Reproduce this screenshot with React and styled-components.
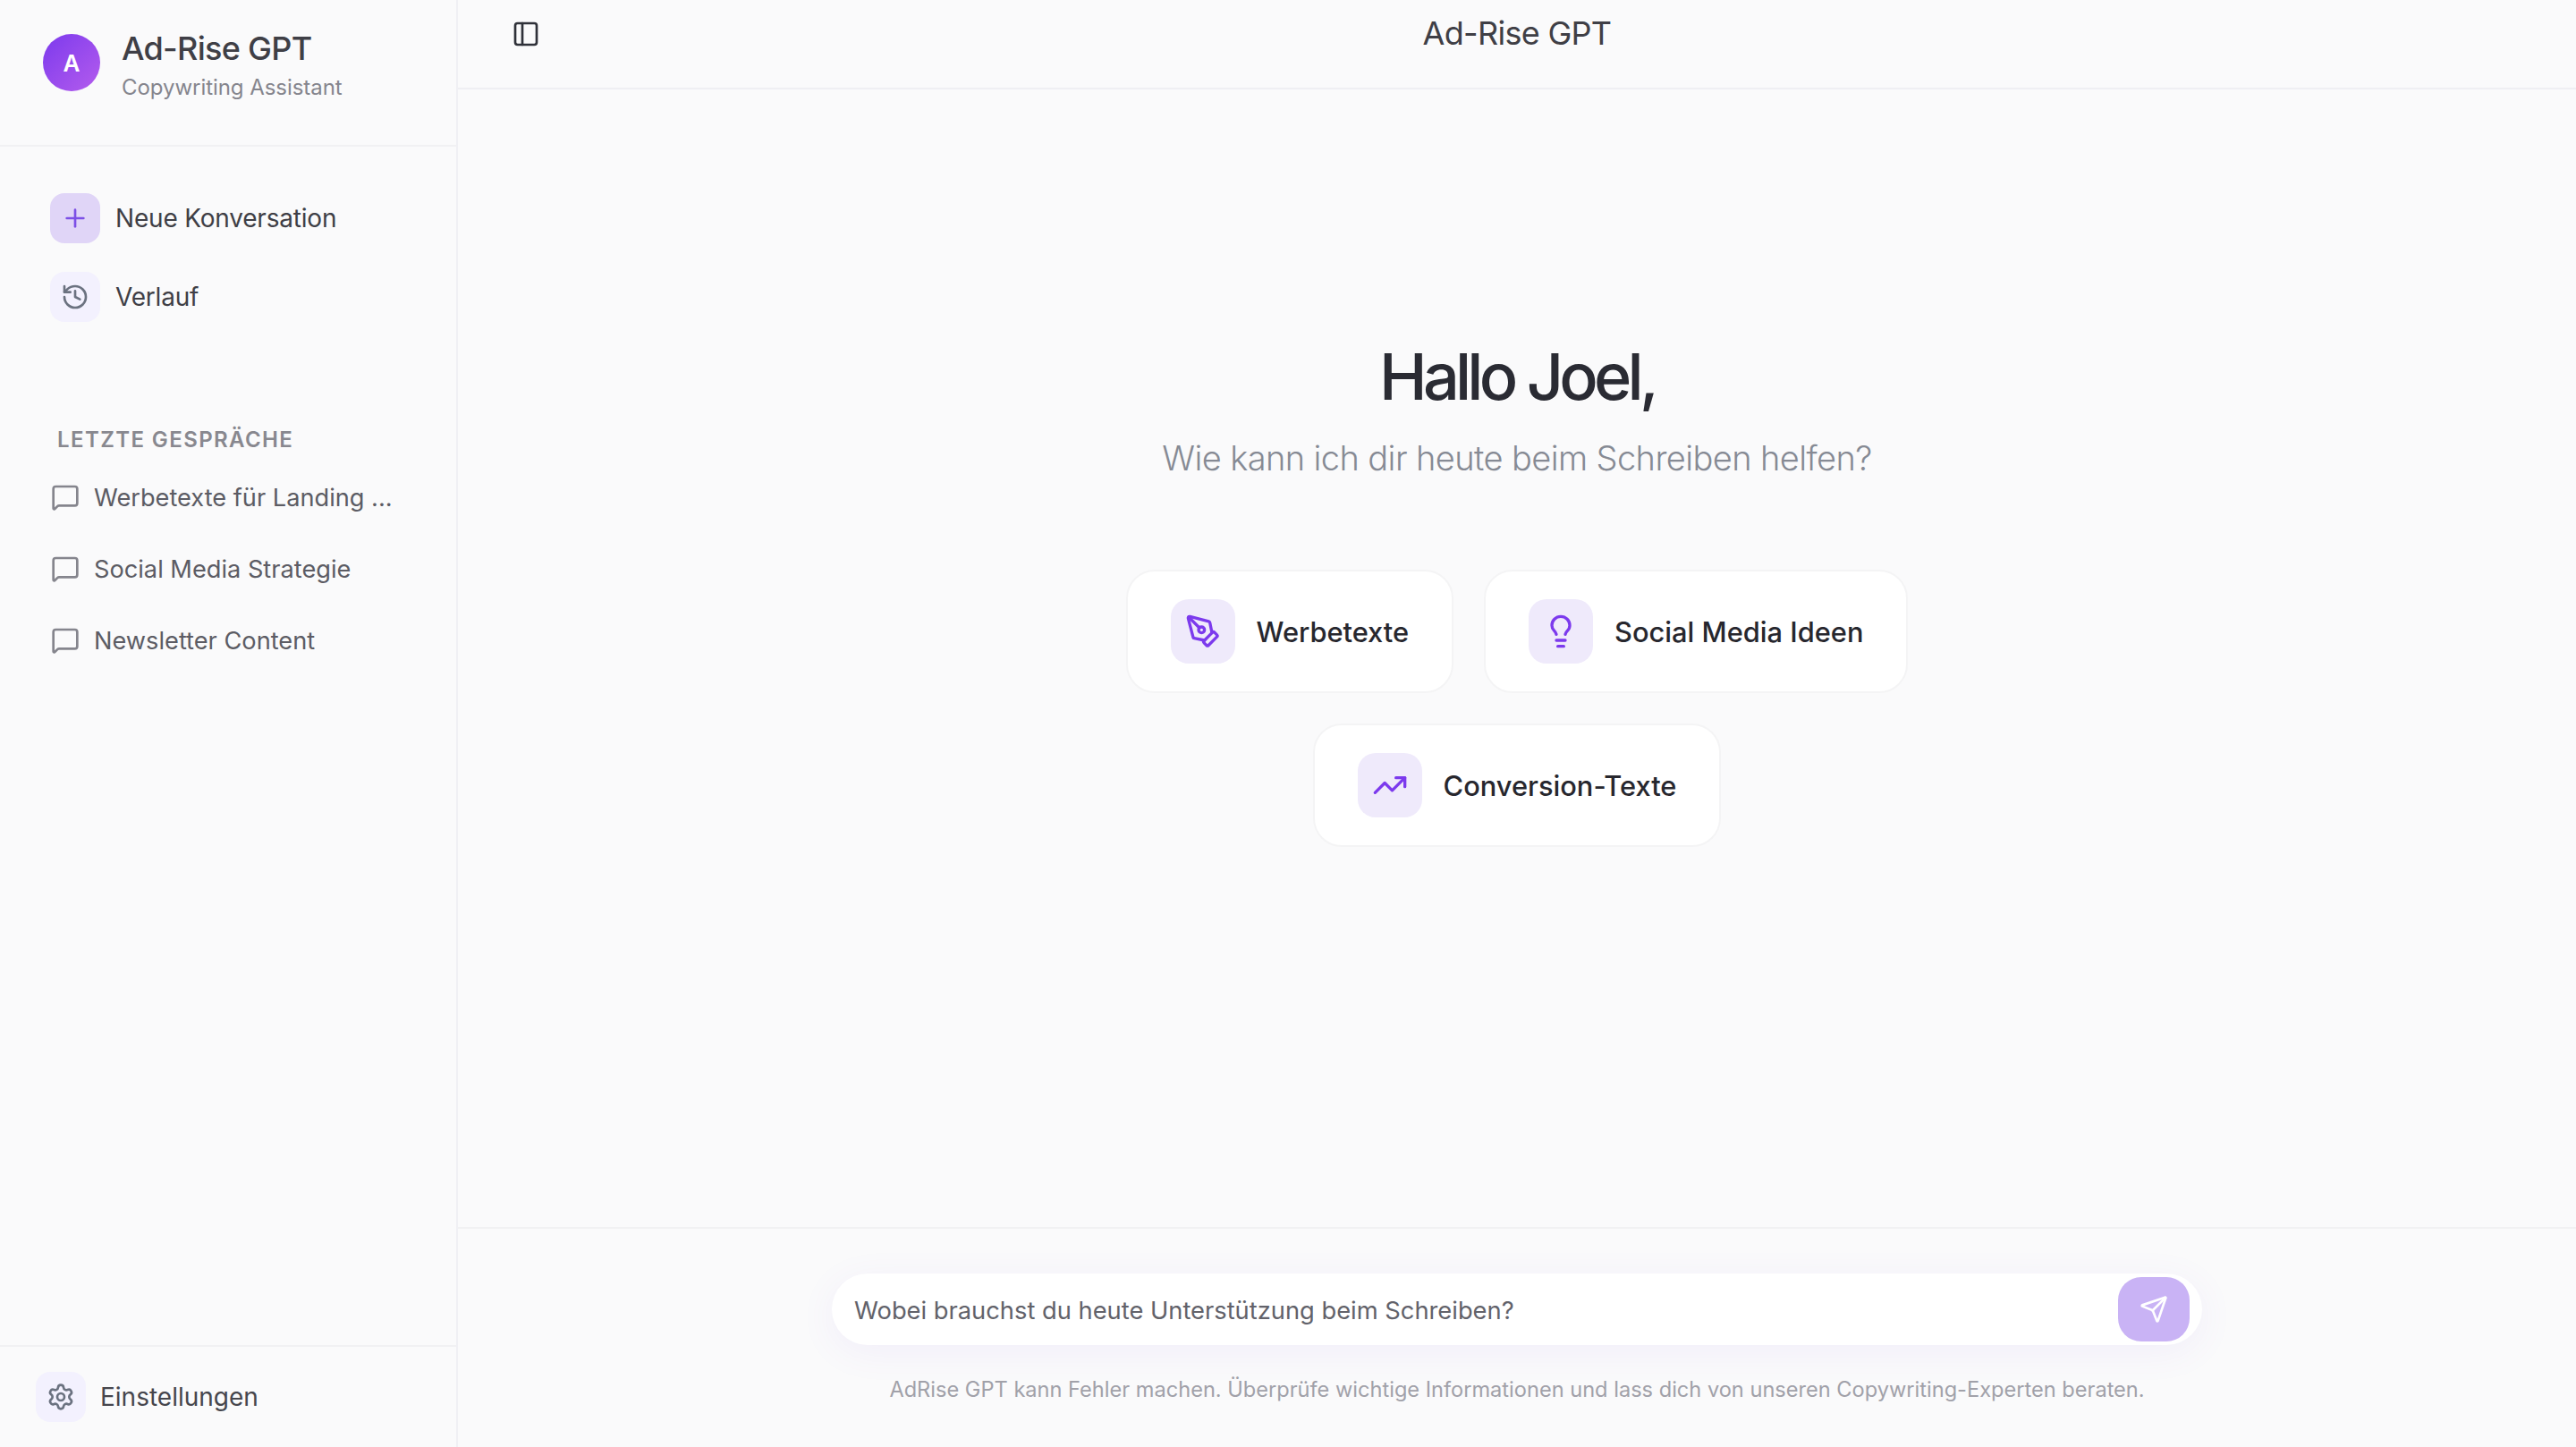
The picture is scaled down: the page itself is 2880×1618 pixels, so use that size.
import React from "react";
import styled, { createGlobalStyle } from "styled-components";
import { Plus, History, MessageSquare, Settings, PanelLeft, PenTool, Lightbulb, TrendingUp, Send } from "lucide-react";

const Global = createGlobalStyle`
  html, body { margin: 0; padding: 0; background: #fafafb; }
  body { font-family: Inter, "Noto Sans", sans-serif; -webkit-font-smoothing: antialiased; }
  * { box-sizing: border-box; }
`;

const Shell = styled.div`
  display: flex;
  width: 2880px;
  height: 1618px;
  overflow: hidden;
  background: #fafafb;
`;

const Sidebar = styled.aside`
  width: 512px;
  flex: none;
  display: flex;
  flex-direction: column;
  border-right: 2px solid #f0f0f4;
`;

const Brand = styled.div`
  height: 164px;
  flex: none;
  display: flex;
  align-items: flex-start;
  gap: 24px;
  padding: 38px 0 0 48px;
  border-bottom: 2px solid #f1f1f3;
`;

const Avatar = styled.div`
  width: 64px;
  height: 64px;
  border-radius: 50%;
  background: linear-gradient(135deg, #7c3aed, #b45ced);
  color: #fff;
  font-size: 26px;
  font-weight: 600;
  display: flex;
  align-items: center;
  justify-content: center;
`;

const BrandText = styled.div`
  display: flex;
  flex-direction: column;
`;

const BrandTitle = styled.div`
  font-size: 36px;
  line-height: 44px;
  font-weight: 500;
  letter-spacing: -0.7px;
  color: #3f3f46;
  margin-top: -6px;
`;

const BrandSub = styled.div`
  font-size: 24px;
  line-height: 32px;
  letter-spacing: -0.05px;
  color: #85858d;
  margin-top: 6px;
`;

const Nav = styled.nav`
  display: flex;
  flex-direction: column;
  gap: 32px;
  padding: 52px 0 0 56px;
`;

const NavItem = styled.div`
  display: flex;
  align-items: center;
  gap: 17px;
  font-size: 28px;
  letter-spacing: -0.2px;
  color: #3f3f46;
`;

const IconBox = styled.span`
  width: 56px;
  height: 56px;
  border-radius: 16px;
  flex: none;
  display: flex;
  align-items: center;
  justify-content: center;
  background: ${(p) => (p.$active ? "#e0d5f7" : "#f3f1fe")};
  color: ${(p) => (p.$active ? "#7c4fe6" : "#6b7280")};
`;

const SectionLabel = styled.div`
  font-size: 24px;
  line-height: 32px;
  font-weight: 600;
  letter-spacing: 1.4px;
  color: #88888f;
  text-transform: uppercase;
  margin: 116px 0 0 64px;
`;

const Conversations = styled.div`
  display: flex;
  flex-direction: column;
  padding: 0 0 0 57px;
  margin-top: 8px;
`;

const ConvRow = styled.div`
  height: 80px;
  display: flex;
  align-items: center;
  gap: 16px;
  font-size: 27.2px;
  color: #5c5c64;
  svg { color: #85858d; flex: none; }
`;

const Spacer = styled.div`
  flex: 1;
`;

const SettingsRow = styled.div`
  height: 114px;
  flex: none;
  display: flex;
  align-items: center;
  gap: 16px;
  padding: 0 0 0 40px;
  border-top: 2px solid #f1f1f3;
  font-size: 28px;
  color: #46464d;
`;

const Main = styled.main`
  flex: 1;
  display: flex;
  flex-direction: column;
  min-width: 0;
`;

const TopBar = styled.header`
  height: 100px;
  flex: none;
  display: flex;
  align-items: center;
  justify-content: center;
  position: relative;
  border-bottom: 2px solid #efeff3;
  font-size: 36px;
  font-weight: 400;
  letter-spacing: -0.7px;
  color: #3f3f46;
  padding-bottom: 24px;
`;

const ToggleButton = styled.span`
  position: absolute;
  left: 60px;
  top: 22px;
  color: #2f3139;
  display: flex;
`;

const Center = styled.section`
  flex: 1;
  display: flex;
  flex-direction: column;
  align-items: center;
  padding-top: 277px;
`;

const Greeting = styled.h1`
  margin: 0;
  font-size: 72px;
  line-height: 88px;
  font-weight: 500;
  letter-spacing: -4.8px;
  color: #2a2b33;
`;

const Subtitle = styled.p`
  margin: 23px 0 0;
  font-size: 38px;
  line-height: 48px;
  font-weight: 300;
  letter-spacing: -0.6px;
  color: #868a94;
`;

const Cards = styled.div`
  display: flex;
  flex-wrap: wrap;
  justify-content: center;
  gap: 34px;
  width: 1000px;
  margin-top: 101px;
`;

const Card = styled.div`
  height: 138px;
  display: flex;
  align-items: center;
  gap: 24px;
  padding: 0 48px;
  background: #fff;
  border: 2px solid #f4f4f5;
  border-radius: 32px;
  font-size: 30.8px;
  font-weight: 500;
  color: #27272e;
`;

const CardIcon = styled.span`
  width: 72px;
  height: 72px;
  flex: none;
  border-radius: 20px;
  background: #efeafb;
  color: #7c3aed;
  display: flex;
  align-items: center;
  justify-content: center;
`;

const Composer = styled.footer`
  height: 246px;
  flex: none;
  display: flex;
  flex-direction: column;
  align-items: center;
  border-top: 2px solid #f1f1f3;
  padding-top: 50px;
`;

const InputBar = styled.div`
  width: 1532px;
  height: 80px;
  display: flex;
  align-items: center;
  justify-content: space-between;
  padding: 0 14px 0 25px;
  background: #fff;
  border-radius: 40px;
  box-shadow: 0 8px 40px rgba(124, 92, 230, 0.07);
  font-size: 27.3px;
  color: #62626a;
`;

const InputText = styled.span`
  margin-top: 2px;
`;

const SendButton = styled.span`
  width: 80px;
  height: 72px;
  border-radius: 26px;
  background: #c9b3f5;
  color: #fff;
  display: flex;
  align-items: center;
  justify-content: center;
`;

const Disclaimer = styled.p`
  margin: 34px 0 0;
  font-size: 23.6px;
  line-height: 32px;
  color: #a1a1a9;
`;

const navIcon = { size: 32, strokeWidth: 2 };

export default function App() {
  return (
    <>
      <Global />
      <Shell>
        <Sidebar>
          <Brand>
            <Avatar>A</Avatar>
            <BrandText>
              <BrandTitle>Ad-Rise GPT</BrandTitle>
              <BrandSub>Copywriting Assistant</BrandSub>
            </BrandText>
          </Brand>
          <Nav>
            <NavItem>
              <IconBox $active><Plus {...navIcon} /></IconBox>
              Neue Konversation
            </NavItem>
            <NavItem>
              <IconBox><History {...navIcon} /></IconBox>
              Verlauf
            </NavItem>
          </Nav>
          <SectionLabel>Letzte Gespräche</SectionLabel>
          <Conversations>
            <ConvRow><MessageSquare size={32} strokeWidth={2} />Werbetexte für Landing ...</ConvRow>
            <ConvRow><MessageSquare size={32} strokeWidth={2} />Social Media Strategie</ConvRow>
            <ConvRow><MessageSquare size={32} strokeWidth={2} />Newsletter Content</ConvRow>
          </Conversations>
          <Spacer />
          <SettingsRow>
            <IconBox><Settings {...navIcon} /></IconBox>
            Einstellungen
          </SettingsRow>
        </Sidebar>
        <Main>
          <TopBar>
            <ToggleButton><PanelLeft size={32} strokeWidth={2} /></ToggleButton>
            Ad-Rise GPT
          </TopBar>
          <Center>
            <Greeting>Hallo Joel,</Greeting>
            <Subtitle>Wie kann ich dir heute beim Schreiben helfen?</Subtitle>
            <Cards>
              <Card><CardIcon><PenTool size={40} strokeWidth={2} /></CardIcon>Werbetexte</Card>
              <Card><CardIcon><Lightbulb size={40} strokeWidth={2} /></CardIcon>Social Media Ideen</Card>
              <Card><CardIcon><TrendingUp size={40} strokeWidth={2} /></CardIcon>Conversion-Texte</Card>
            </Cards>
          </Center>
          <Composer>
            <InputBar>
              <InputText>Wobei brauchst du heute Unterstützung beim Schreiben?</InputText>
              <SendButton><Send size={32} strokeWidth={2} /></SendButton>
            </InputBar>
            <Disclaimer>AdRise GPT kann Fehler machen. Überprüfe wichtige Informationen und lass dich von unseren Copywriting-Experten beraten.</Disclaimer>
          </Composer>
        </Main>
      </Shell>
    </>
  );
}
